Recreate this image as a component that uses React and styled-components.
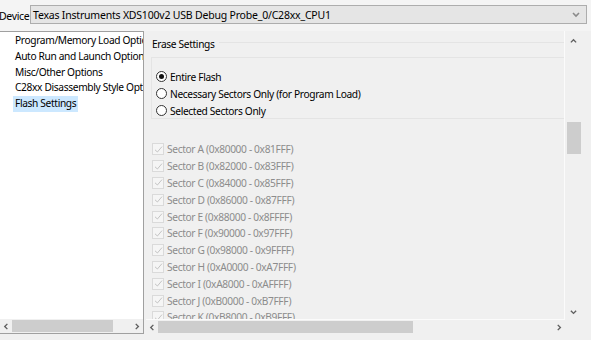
import React from "react";
import styled, { createGlobalStyle } from "styled-components";

const GlobalStyle = createGlobalStyle`
  html, body {
    margin: 0;
    padding: 0;
    background: #f0f0f0;
  }
  body {
    font-family: "Noto Sans", "Open Sans", sans-serif;
    font-size: 10.2px;
    letter-spacing: -0.35px;
    color: #000;
  }
`;

const treeItems = [
  "Program/Memory Load Options",
  "Auto Run and Launch Options",
  "Misc/Other Options",
  "C28xx Disassembly Style Options",
  "Flash Settings",
];

const sectors = [
  ["A", "0x80000", "0x81FFF"],
  ["B", "0x82000", "0x83FFF"],
  ["C", "0x84000", "0x85FFF"],
  ["D", "0x86000", "0x87FFF"],
  ["E", "0x88000", "0x8FFFF"],
  ["F", "0x90000", "0x97FFF"],
  ["G", "0x98000", "0x9FFFF"],
  ["H", "0xA0000", "0xA7FFF"],
  ["I", "0xA8000", "0xAFFFF"],
  ["J", "0xB0000", "0xB7FFF"],
  ["K", "0xB8000", "0xB9FFF"],
];

const Chevron = ({ dir, color = "#606060", size = 7 }) => {
  const paths = {
    up: "M1 5 L4 2 L7 5",
    down: "M1 2 L4 5 L7 2",
    left: "M5 1 L2 4 L5 7",
    right: "M2 1 L5 4 L2 7",
  };
  return (
    <svg width={size} height={size} viewBox="0 0 8 8">
      <path d={paths[dir]} fill="none" stroke={color} strokeWidth="1.6" />
    </svg>
  );
};

export default function App() {
  return (
    <>
      <GlobalStyle />
      <Window>
        <TopBar>
          <Label>Device</Label>
          <Combo>
            <span>Texas Instruments XDS100v2 USB Debug Probe_0/C28xx_CPU1</span>
            <Chevron dir="down" color="#8a8a8a" size={8} />
          </Combo>
        </TopBar>
        <Body>
          <LeftPane>
            <Tree>
              {treeItems.map((item, i) => (
                <TreeItem key={item} $selected={i === treeItems.length - 1}>
                  {item}
                </TreeItem>
              ))}
            </Tree>
            <HScroll>
              <ArrowBtn><Chevron dir="left" /></ArrowBtn>
              <Track>
                <Thumb style={{ width: 101 }} />
              </Track>
              <ArrowBtn><Chevron dir="right" /></ArrowBtn>
            </HScroll>
          </LeftPane>
          <RightPane>
            <ScrollRow>
              <Content>
                <SectionTitle>Erase Settings</SectionTitle>
                <RadioBox>
                  <RadioRow>
                    <Radio $checked />
                    Entire Flash
                  </RadioRow>
                  <RadioRow>
                    <Radio />
                    Necessary Sectors Only (for Program Load)
                  </RadioRow>
                  <RadioRow>
                    <Radio />
                    Selected Sectors Only
                  </RadioRow>
                </RadioBox>
                <SectorList>
                  {sectors.map(([name, from, to]) => (
                    <SectorRow key={name}>
                      <CheckBox>
                        <svg width="9" height="9" viewBox="0 0 9 9">
                          <path d="M1 4.8 L3.4 7 L8 1.6" fill="none" stroke="#c4c4c4" strokeWidth="1" />
                        </svg>
                      </CheckBox>
                      Sector {name} ({from} - {to})
                    </SectorRow>
                  ))}
                </SectorList>
              </Content>
              <VScroll>
                <ArrowBtn $v><Chevron dir="up" /></ArrowBtn>
                <VTrack>
                  <VThumb />
                </VTrack>
                <ArrowBtn $v><Chevron dir="down" /></ArrowBtn>
              </VScroll>
            </ScrollRow>
            <HScrollRight>
              <ArrowBtn><Chevron dir="left" /></ArrowBtn>
              <Track>
                <Thumb style={{ width: 255 }} />
              </Track>
              <ArrowBtn><Chevron dir="right" /></ArrowBtn>
            </HScrollRight>
          </RightPane>
        </Body>
      </Window>
    </>
  );
}

const Window = styled.div`
  width: 591px;
  height: 340px;
  display: flex;
  flex-direction: column;
  overflow: hidden;
  background: #f0f0f0;
`;

const TopBar = styled.div`
  height: 31px;
  display: flex;
  align-items: center;
  padding-right: 4px;
  background: #f4f4f4;
  box-sizing: border-box;
`;

const Label = styled.div`
  margin-left: -1px;
  width: 31px;
  font-size: 10.5px;
`;

const Combo = styled.div`
  flex: 1;
  height: 19px;
  margin-top: -2px;
  box-sizing: border-box;
  border: 1px solid #adadad;
  background: #e5e5e5;
  display: flex;
  align-items: center;
  justify-content: space-between;
  padding: 0 6px 0 2px;
  font-size: 10.5px;
  letter-spacing: -0.2px;
`;

const Body = styled.div`
  flex: 1;
  display: flex;
  min-height: 0;
`;

const LeftPane = styled.div`
  width: 144px;
  display: flex;
  flex-direction: column;
  background: #fff;
  border-top: 1px solid #a0a0a0;
  border-right: 1px solid #a0a0a0;
  border-bottom: 1px solid #a0a0a0;
  margin-bottom: 6px;
  box-sizing: border-box;
  overflow: hidden;
`;

const Tree = styled.div`
  flex: 1;
  padding: 1px 0 0 13px;
`;

const TreeItem = styled.div`
  height: 15.75px;
  line-height: 15.75px;
  white-space: nowrap;
  padding: 0 2px;
  display: table;
  background: ${(p) => (p.$selected ? "#cce8ff" : "transparent")};
`;

const HScroll = styled.div`
  height: 14px;
  display: flex;
  align-items: center;
  background: #f0f0f0;
`;

const HScrollRight = styled(HScroll)`
  height: 14px;
  width: 419px;
  margin: 0 0 6px 2px;
`;

const ArrowBtn = styled.div`
  width: ${(p) => (p.$v ? "17px" : "12px")};
  height: ${(p) => (p.$v ? "16px" : "14px")};
  display: flex;
  align-items: center;
  justify-content: center;
  flex-shrink: 0;
`;

const Track = styled.div`
  flex: 1;
  height: 100%;
  display: flex;
  align-items: center;
`;

const Thumb = styled.div`
  height: 12px;
  background: #cdcdcd;
`;

const RightPane = styled.div`
  flex: 1;
  display: flex;
  flex-direction: column;
  min-width: 0;
  padding-right: 8px;
`;

const ScrollRow = styled.div`
  flex: 1;
  display: flex;
  min-height: 0;
`;

const Content = styled.div`
  width: 419px;
  margin-left: 2px;
  padding: 5px 0 0 6px;
  box-sizing: border-box;
  overflow: hidden;
  border-right: 1px solid #fbfbfb;
  border-bottom: 1px solid #fbfbfb;
`;

const SectionTitle = styled.div`
  display: flex;
  align-items: center;
  height: 16px;
  gap: 4px;
  &::after {
    content: "";
    flex: 1;
    border-top: 1px solid #e4e4e4;
    margin-top: -4px;
  }
`;

const RadioBox = styled.div`
  margin: 5px 0 0 -1px;
  height: 62px;
  box-sizing: border-box;
  border: 1px solid #e4e4e4;
  border-right: none;
  padding: 10px 0 0 4px;
`;

const RadioRow = styled.div`
  height: 17px;
  display: flex;
  align-items: center;
  gap: 3px;
  white-space: nowrap;
`;

const Radio = styled.span`
  width: 11px;
  height: 11px;
  border-radius: 50%;
  border: 1px solid #333;
  background: #fff;
  box-sizing: border-box;
  display: inline-flex;
  align-items: center;
  justify-content: center;
  &::after {
    content: "";
    width: 5px;
    height: 5px;
    border-radius: 50%;
    background: ${(p) => (p.$checked ? "#111" : "transparent")};
  }
`;

const SectorList = styled.div`
  margin-top: 22px;
`;

const SectorRow = styled.div`
  height: 16.8px;
  display: flex;
  align-items: center;
  gap: 3px;
  color: #8c8c8c;
  white-space: nowrap;
`;

const CheckBox = styled.span`
  width: 12px;
  height: 12px;
  border: 1px solid #dadada;
  background: #f5f5f5;
  box-sizing: border-box;
  display: inline-flex;
  align-items: center;
  justify-content: center;
`;

const VScroll = styled.div`
  width: 17px;
  display: flex;
  flex-direction: column;
  padding: 2px 0 0;
`;

const VTrack = styled.div`
  flex: 1;
  display: flex;
  justify-content: center;
  padding-top: 73px;
`;

const VThumb = styled.div`
  width: 14px;
  height: 32px;
  background: #cdcdcd;
`;
